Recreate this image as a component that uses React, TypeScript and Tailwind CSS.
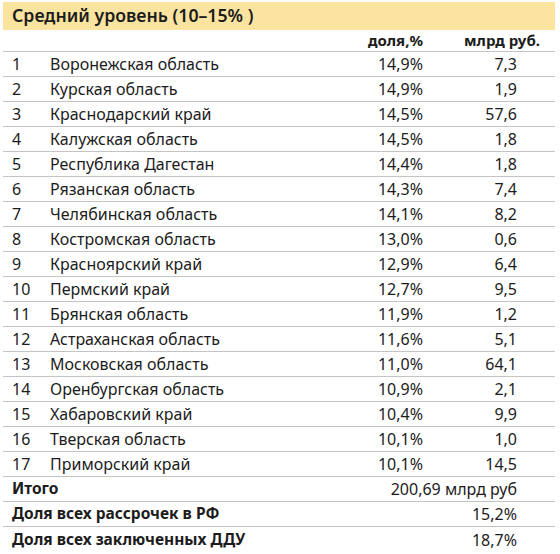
import React from "react";

const rows: [string, string, string, string][] = [
  ["1", "Воронежская область", "14,9%", "7,3"],
  ["2", "Курская область", "14,9%", "1,9"],
  ["3", "Краснодарский край", "14,5%", "57,6"],
  ["4", "Калужская область", "14,5%", "1,8"],
  ["5", "Республика Дагестан", "14,4%", "1,8"],
  ["6", "Рязанская область", "14,3%", "7,4"],
  ["7", "Челябинская область", "14,1%", "8,2"],
  ["8", "Костромская область", "13,0%", "0,6"],
  ["9", "Красноярский край", "12,9%", "6,4"],
  ["10", "Пермский край", "12,7%", "9,5"],
  ["11", "Брянская область", "11,9%", "1,2"],
  ["12", "Астраханская область", "11,6%", "5,1"],
  ["13", "Московская область", "11,0%", "64,1"],
  ["14", "Оренбургская область", "10,9%", "2,1"],
  ["15", "Хабаровский край", "10,4%", "9,9"],
  ["16", "Тверская область", "10,1%", "1,0"],
  ["17", "Приморский край", "10,1%", "14,5"],
];

export default function App() {
  return (
    <div
      className="w-[560px] h-[554px] bg-white text-[#1c1c1c] pt-[2px] pl-[3px] overflow-hidden"
      style={{ fontFamily: '"Noto Sans", sans-serif' }}
    >
      <div className="w-[552px]">
        <div className="h-[28px] bg-[#fbe4a0] flex items-center pl-[9px] text-[17.7px] font-semibold leading-none">
          Средний уровень (10–15% )
        </div>
        <div className="h-[22px] flex items-center text-[15px] font-bold border-b border-[#c4c4c4]">
          <div className="w-[420px] text-right">доля,%</div>
          <div className="w-[117px] text-right">млрд руб.</div>
        </div>
        {rows.map(([n, name, p, v]) => (
          <div
            key={n}
            className="h-[25px] flex items-center text-[16px] border-b border-[#c4c4c4]"
          >
            <div className="w-[47px] pl-[9px]">{n}</div>
            <div className="flex-1">{name}</div>
            <div className="w-[100px] text-right">{p}</div>
            <div className="w-[94px] text-right">{v}</div>
            <div className="w-[38px]" />
          </div>
        ))}
        <div className="h-[25px] flex items-center text-[16px] border-b border-[#c4c4c4]">
          <div className="flex-1 pl-[9px] font-bold text-[15.5px]">Итого</div>
          <div className="text-right pr-[38px]">200,69 млрд руб</div>
        </div>
        <div className="h-[25px] flex items-center text-[16px] border-b border-[#c4c4c4]">
          <div className="flex-1 pl-[9px] font-bold text-[15.5px]">Доля всех рассрочек в РФ</div>
          <div className="text-right pr-[38px]">15,2%</div>
        </div>
        <div className="h-[25px] flex items-center text-[16px]">
          <div className="flex-1 pl-[9px] font-bold text-[15.5px]">Доля всех заключенных ДДУ</div>
          <div className="text-right pr-[38px]">18,7%</div>
        </div>
      </div>
    </div>
  );
}
